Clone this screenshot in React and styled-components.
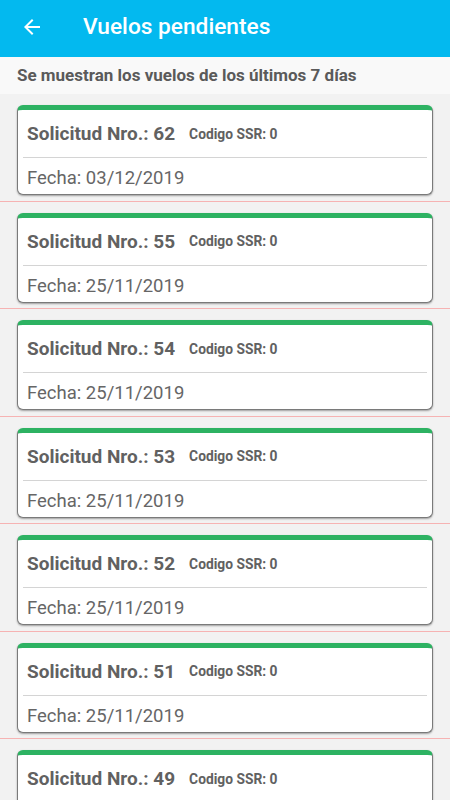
import React from 'react';
import styled, { createGlobalStyle } from 'styled-components';

const vuelos = [
    { nro: 62, ssr: 0, fecha: '03/12/2019' },
    { nro: 55, ssr: 0, fecha: '25/11/2019' },
    { nro: 54, ssr: 0, fecha: '25/11/2019' },
    { nro: 53, ssr: 0, fecha: '25/11/2019' },
    { nro: 52, ssr: 0, fecha: '25/11/2019' },
    { nro: 51, ssr: 0, fecha: '25/11/2019' },
    { nro: 49, ssr: 0, fecha: '22/11/2019' },
];

function App() {
    return (
        <>
            <GlobalStyle />
            <Screen>
                <Toolbar>
                    <BackButton aria-label="Volver">
                        <svg width="24" height="24" viewBox="0 0 24 24">
                            <path fill="#fff" d="M20 11H7.83l5.59-5.59L12 4l-8 8 8 8 1.41-1.41L7.83 13H20v-2z" />
                        </svg>
                    </BackButton>
                    <Title>Vuelos pendientes</Title>
                </Toolbar>

                <Notice>Se muestran los vuelos de los últimos 7 días</Notice>

                <List>
                    {vuelos.map(v => (
                        <Item key={v.nro}>
                            <Card>
                                <CardHead>
                                    <Solicitud>Solicitud Nro.: {v.nro}</Solicitud>
                                    <Codigo>Codigo SSR: {v.ssr}</Codigo>
                                </CardHead>
                                <Fecha>Fecha: {v.fecha}</Fecha>
                            </Card>
                        </Item>
                    ))}
                </List>
            </Screen>
        </>
    );
}

export default App;

const GlobalStyle = createGlobalStyle`
    html, body {
        margin: 0;
        padding: 0;
        background: #f2f2f2;
        font-family: Roboto, "Noto Sans", sans-serif;
    }
`;

const Screen = styled.div`
    width: 450px;
    height: 800px;
    overflow: hidden;
    display: flex;
    flex-direction: column;
    background: #f2f2f2;
`;

const Toolbar = styled.header`
    height: 57px;
    flex-shrink: 0;
    display: flex;
    align-items: center;
    background: #03b9ef;
    padding: 0 0 4px 20px;
    box-sizing: border-box;
`;

const BackButton = styled.button`
    display: flex;
    align-items: center;
    justify-content: center;
    width: 24px;
    height: 24px;
    padding: 0;
    border: none;
    background: none;
    margin-right: 39px;
`;

const Title = styled.h1`
    margin: 0;
    color: #fff;
    font-size: 22.7px;
    font-weight: 500;
`;

const Notice = styled.div`
    height: 36px;
    flex-shrink: 0;
    display: flex;
    align-items: center;
    padding: 0 17px 1px;
    background: #f9f9f9;
    color: #5a5a5a;
    font-size: 17px;
    font-weight: 700;
`;

const List = styled.div`
    display: flex;
    flex-direction: column;
`;

const Item = styled.div`
    padding: 11px 17px 6px;
    border-bottom: 1px solid #f6b3b3;
    height: 107.5px;
    box-sizing: border-box;
`;

const Card = styled.div`
    height: 90px;
    box-sizing: border-box;
    background: #fff;
    border: 1px solid #7a7a7a;
    border-top: 5px solid #2db262;
    border-radius: 6px;
    box-shadow: 0 1px 2px rgba(0, 0, 0, 0.35);
    padding: 0 5px;
    display: flex;
    flex-direction: column;
`;

const CardHead = styled.div`
    height: 47px;
    display: flex;
    align-items: center;
    gap: 14px;
    padding: 0 4px;
    border-bottom: 1px solid #d4d4d4;
`;

const Solicitud = styled.span`
    color: #616161;
    font-size: 19px;
    font-weight: 700;
`;

const Codigo = styled.span`
    color: #616161;
    font-size: 13.8px;
    font-weight: 700;
`;

const Fecha = styled.div`
    flex: 1;
    display: flex;
    align-items: center;
    padding: 4px 4px 0;
    color: #666;
    font-size: 18.5px;
`;
